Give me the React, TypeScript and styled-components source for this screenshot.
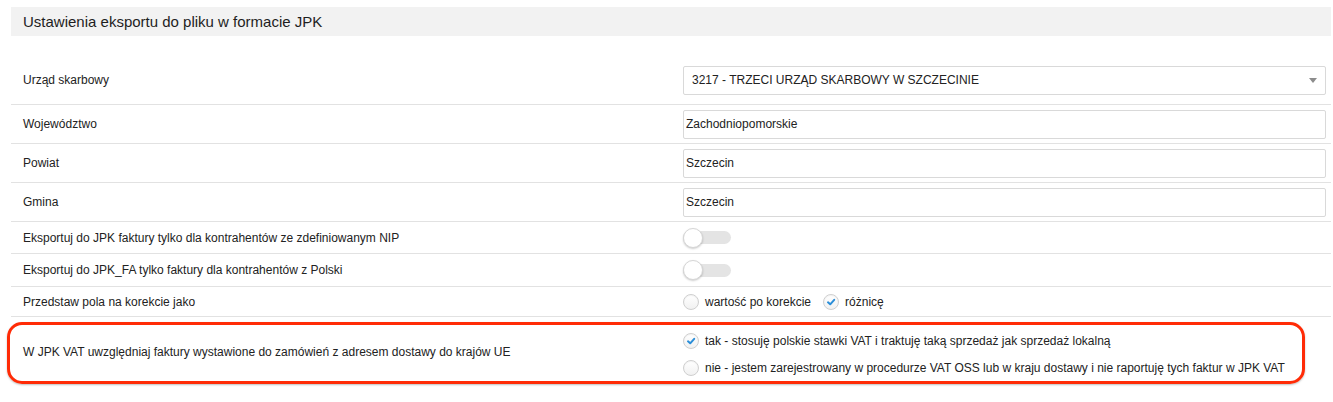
import React, { FunctionComponent } from 'react';
import styled, { createGlobalStyle } from 'styled-components';

const GlobalStyle = createGlobalStyle`
  body {
    margin: 0;
    background: #fff;
    font-family: 'Liberation Sans', Arial, sans-serif;
    color: #222;
  }
`;

const Page = styled.div`
  padding: 7px 2px 0 11px;
`;

const Header = styled.div`
  height: 29px;
  line-height: 29px;
  padding-left: 12px;
  background-color: #f2f2f2;
  font-size: 15px;
  color: #1e1e1e;
`;

const Form = styled.div`
  margin-top: 20px;
`;

const Row = styled.div<{ $height: number; $last?: boolean }>`
  position: relative;
  display: grid;
  grid-template-columns: 660px 1fr;
  align-items: center;
  min-height: ${(p) => p.$height}px;
  border-bottom: ${(p) => (p.$last ? 'none' : '1px solid #e2e2e2')};
  font-size: 12px;
`;

const Label = styled.div`
  padding-left: 12px;
`;

const Field = styled.div`
  padding: 0 5px 0 12px;
  display: flex;
  align-items: center;
`;

const TextInput = styled.input`
  box-sizing: border-box;
  width: 100%;
  height: 29px;
  padding: 0 2px;
  border: 1px solid #d9d9d9;
  border-radius: 2px;
  font-family: 'Liberation Sans', Arial, sans-serif;
  font-size: 12px;
  color: #222;
  outline: none;
`;

const SelectBox = styled.div`
  box-sizing: border-box;
  width: 100%;
  height: 29px;
  padding: 0 8px;
  border: 1px solid #d9d9d9;
  border-radius: 2px;
  display: flex;
  align-items: center;
  justify-content: space-between;
`;

const Toggle = styled.div`
  position: relative;
  width: 48px;
  height: 20px;
  display: flex;
  align-items: center;

  &::before {
    content: '';
    display: block;
    width: 48px;
    height: 13px;
    border-radius: 7px;
    background: #e4e4e4;
  }
`;

const Knob = styled.span`
  position: absolute;
  left: 0;
  top: 0;
  width: 20px;
  height: 20px;
  box-sizing: border-box;
  border-radius: 50%;
  background: #fff;
  border: 1px solid #d6d6d6;
  box-shadow: 0 1px 2px rgba(0, 0, 0, 0.2);
`;

const Options = styled.div<{ $stack?: boolean }>`
  display: flex;
  flex-direction: ${(p) => (p.$stack ? 'column' : 'row')};
  gap: ${(p) => (p.$stack ? '11px' : '12px')};
  padding: ${(p) => (p.$stack ? '4px 0 0' : '0')};
`;

const Option = styled.label`
  display: flex;
  align-items: center;
  gap: 6px;
  height: 16px;
`;

const Radio = styled.span`
  box-sizing: border-box;
  width: 16px;
  height: 16px;
  border-radius: 50%;
  border: 1px solid #cfcfcf;
  background: linear-gradient(#ffffff, #f1f1f1);
  box-shadow: inset 0 1px 1px rgba(0, 0, 0, 0.05);
  display: flex;
  align-items: center;
  justify-content: center;
`;

const Highlight = styled.div`
  position: absolute;
  left: -4px;
  right: 26px;
  top: 5px;
  bottom: 3px;
  border: 3px solid #ff2b06;
  border-radius: 15px;
  pointer-events: none;
  box-shadow: 0 1px 2px rgba(0, 0, 0, 0.25);
`;

const Check = () => (
  <svg width="10" height="10" viewBox="0 0 10 10">
    <path d="M2 5.3 L4.2 7.3 L8.2 2.8" fill="none" stroke="#2b8ed8" strokeWidth="2" strokeLinecap="round" strokeLinejoin="round" />
  </svg>
);

const RadioOption: FunctionComponent<{ checked?: boolean; label: string }> = ({ checked, label }) => (
  <Option>
    <Radio>{checked && <Check />}</Radio>
    {label}
  </Option>
);

const App = () => (
  <Page>
    <GlobalStyle />
    <Header>Ustawienia eksportu do pliku w formacie JPK</Header>
    <Form>
      <Row $height={48}>
        <Label>Urząd skarbowy</Label>
        <Field>
          <SelectBox>
            3217 - TRZECI URZĄD SKARBOWY W SZCZECINIE
            <svg width="8" height="5" viewBox="0 0 8 5">
              <polygon points="0,0 8,0 4,5" fill="#8c8c8c" />
            </svg>
          </SelectBox>
        </Field>
      </Row>
      <Row $height={38}>
        <Label>Województwo</Label>
        <Field>
          <TextInput readOnly value="Zachodniopomorskie" />
        </Field>
      </Row>
      <Row $height={38}>
        <Label>Powiat</Label>
        <Field>
          <TextInput readOnly value="Szczecin" />
        </Field>
      </Row>
      <Row $height={38}>
        <Label>Gmina</Label>
        <Field>
          <TextInput readOnly value="Szczecin" />
        </Field>
      </Row>
      <Row $height={31}>
        <Label>Eksportuj do JPK faktury tylko dla kontrahentów ze zdefiniowanym NIP</Label>
        <Field>
          <Toggle><Knob /></Toggle>
        </Field>
      </Row>
      <Row $height={32}>
        <Label>Eksportuj do JPK_FA tylko faktury dla kontrahentów z Polski</Label>
        <Field>
          <Toggle><Knob /></Toggle>
        </Field>
      </Row>
      <Row $height={29}>
        <Label>Przedstaw pola na korekcie jako</Label>
        <Field>
          <Options>
            <RadioOption label="wartość po korekcie" />
            <RadioOption checked label="różnicę" />
          </Options>
        </Field>
      </Row>
      <Row $height={70} $last>
        <Label>W JPK VAT uwzględniaj faktury wystawione do zamówień z adresem dostawy do krajów UE</Label>
        <Field>
          <Options $stack>
            <RadioOption checked label="tak - stosuję polskie stawki VAT i traktuję taką sprzedaż jak sprzedaż lokalną" />
            <RadioOption label="nie - jestem zarejestrowany w procedurze VAT OSS lub w kraju dostawy i nie raportuję tych faktur w JPK VAT" />
          </Options>
        </Field>
        <Highlight />
      </Row>
    </Form>
  </Page>
);

export default App;
